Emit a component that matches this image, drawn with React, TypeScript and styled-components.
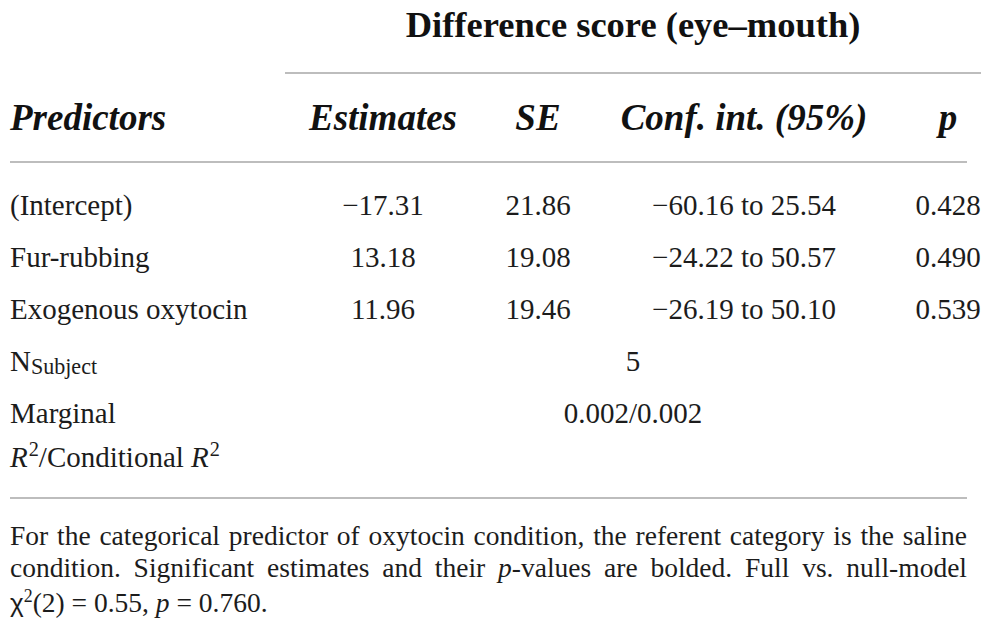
import styled, { createGlobalStyle, css } from "styled-components";

const GlobalStyle = createGlobalStyle`
  html, body {
    margin: 0;
    padding: 0;
    background: #fff;
    overflow: hidden;
  }
  body {
    font-family: "Liberation Serif", "Times New Roman", serif;
    color: #1c1c1c;
  }
`;

// five columns: predictor label, estimates, SE, conf. int., p
const COLUMNS = "275px 196px 114px 298px 110px";
const RULE = "2px solid #bdbdbd";

const Page = styled.div`
  padding-left: 10px;
  width: 957px;
`;

const TitleRow = styled.div`
  display: grid;
  grid-template-columns: ${COLUMNS};
`;

const Title = styled.div`
  grid-column: 2 / 6;
  margin-right: 22px;
  padding: 3px 0 25px;
  border-bottom: ${RULE};
  text-align: center;
  font-size: 36.5px;
  line-height: 44px;
  font-weight: 700;
  color: #111;
`;

const HeaderRow = styled.div`
  display: grid;
  grid-template-columns: ${COLUMNS};
  padding: 22px 0 21px;
  border-bottom: ${RULE};
`;

const HeadCell = styled.div<{ $left?: boolean }>`
  text-align: ${(p) => (p.$left ? "left" : "center")};
  font-size: 37px;
  line-height: 44px;
  font-weight: 700;
  font-style: italic;
  color: #111;
`;

const Body = styled.div`
  display: grid;
  grid-template-columns: ${COLUMNS};
  padding: 16px 0 14px;
  border-bottom: ${RULE};
`;

const Cell = styled.div<{ $left?: boolean; $span?: boolean }>`
  padding: 8px 0;
  font-size: 29px;
  line-height: 36px;
  text-align: ${(p) => (p.$left ? "left" : "center")};
  ${(p) =>
    p.$span &&
    css`
      grid-column: 2 / 6;
      margin-right: 22px;
    `}
`;

const Sub = styled.span`
  font-size: 0.76em;
  vertical-align: -3px;
  line-height: 0;
`;

const Sup = styled.sup`
  font-size: 0.7em;
  vertical-align: super;
  margin-left: 1px;
`;

const Em = styled.i`
  font-style: italic;
`;

const Footnote = styled.div`
  padding-top: 21px;
  font-size: 27.5px;
  line-height: 32px;
  color: #1c1c1c;
`;

const NoteLine = styled.div<{ $justify?: boolean; $last?: boolean }>`
  white-space: nowrap;
  text-align: ${(p) => (p.$justify ? "justify" : "left")};
  text-align-last: ${(p) => (p.$justify ? "justify" : "auto")};
  margin-top: ${(p) => (p.$last ? "3px" : "0")};
`;

const Chi = styled.span`
  font-family: "Liberation Sans", "DejaVu Sans", sans-serif;
  font-size: 0.95em;
`;

const NoteSup = styled.sup`
  font-size: 0.65em;
  line-height: 1;
  vertical-align: super;
`;

const rows = [
  { label: "(Intercept)", est: "−17.31", se: "21.86", ci: "−60.16 to 25.54", p: "0.428" },
  { label: "Fur-rubbing", est: "13.18", se: "19.08", ci: "−24.22 to 50.57", p: "0.490" },
  { label: "Exogenous oxytocin", est: "11.96", se: "19.46", ci: "−26.19 to 50.10", p: "0.539" },
];

function App() {
  return (
    <>
      <GlobalStyle />
      <Page>
        <TitleRow>
          <Title>Difference score (eye–mouth)</Title>
        </TitleRow>
        <HeaderRow>
          <HeadCell $left>Predictors</HeadCell>
          <HeadCell>Estimates</HeadCell>
          <HeadCell>SE</HeadCell>
          <HeadCell>Conf. int. (95%)</HeadCell>
          <HeadCell>p</HeadCell>
        </HeaderRow>
        <Body>
          {rows.map((r) => (
            <>
              <Cell $left key={r.label}>{r.label}</Cell>
              <Cell>{r.est}</Cell>
              <Cell>{r.se}</Cell>
              <Cell>{r.ci}</Cell>
              <Cell>{r.p}</Cell>
            </>
          ))}
          <Cell $left>
            N<Sub>Subject</Sub>
          </Cell>
          <Cell $span>5</Cell>
          <Cell $left>
            Marginal
            <br />
            <Em>R</Em>
            <Sup>2</Sup>/Conditional <Em>R</Em>
            <Sup>2</Sup>
          </Cell>
          <Cell $span>0.002/0.002</Cell>
        </Body>
        <Footnote>
          <NoteLine $justify>
            For the categorical predictor of oxytocin condition, the referent category is the saline
          </NoteLine>
          <NoteLine $justify>
            condition. Significant estimates and their <Em>p</Em>-values are bolded. Full vs. null-model
          </NoteLine>
          <NoteLine $last>
            <Chi>χ</Chi>
            <NoteSup>2</NoteSup>(2) = 0.55, <Em>p</Em> = 0.760.
          </NoteLine>
        </Footnote>
      </Page>
    </>
  );
}

export default App;
